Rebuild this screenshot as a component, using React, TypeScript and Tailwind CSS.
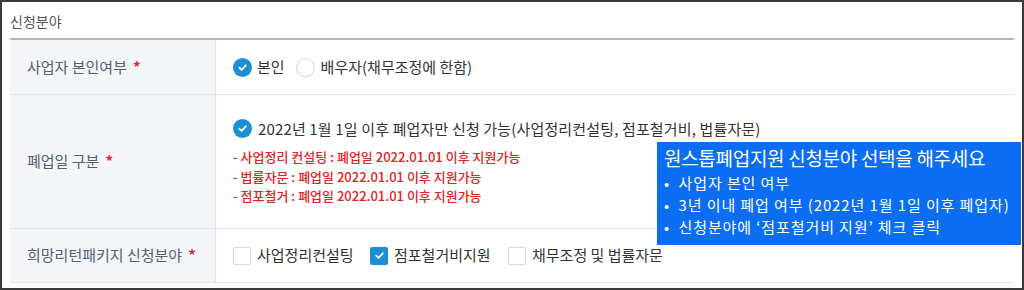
import type { ReactNode } from "react";

const FONT = { fontFamily: '"Noto Sans CJK KR", "Noto Sans", sans-serif' };

const CheckCircle = () => (
  <span className="flex h-[19px] w-[19px] shrink-0 items-center justify-center rounded-full bg-[#1d8fd6]">
    <svg width="11" height="11" viewBox="0 0 12 12" fill="none">
      <path d="M2.5 6.2 5 8.6 9.6 3.6" stroke="#fff" strokeWidth="2" strokeLinecap="round" strokeLinejoin="round" />
    </svg>
  </span>
);

const EmptyCircle = () => (
  <span className="block h-[19px] w-[19px] shrink-0 rounded-full border border-[#cfd3d8] bg-white" />
);

const Box = ({ checked }: { checked?: boolean }) =>
  checked ? (
    <span className="flex h-[18px] w-[18px] shrink-0 items-center justify-center rounded-[2px] bg-[#1d8fd6]">
      <svg width="11" height="11" viewBox="0 0 12 12" fill="none">
        <path d="M2.5 6.2 5 8.6 9.6 3.6" stroke="#fff" strokeWidth="2" strokeLinecap="round" strokeLinejoin="round" />
      </svg>
    </span>
  ) : (
    <span className="block h-[18px] w-[18px] shrink-0 rounded-[2px] border border-[#d4d7dc] bg-white" />
  );

const Row = ({ label, children, className }: { label: string; children: ReactNode; className: string }) => (
  <div className={`flex border-b border-[#e3e5e8] ${className}`}>
    <div className="flex w-[206px] shrink-0 items-center border-r border-[#e3e5e8] bg-[#f3f5f8] pl-[17px] text-[15px] text-[#556070]">
      {label}
      <span className="ml-[6px] font-bold text-[#e0262f]">*</span>
    </div>
    <div className="flex flex-1 flex-col justify-center pl-[17px]">{children}</div>
  </div>
);

export default function App() {
  return (
    <div className="relative h-[290px] w-[1024px] overflow-hidden border-2 border-[#3a3a3a] bg-white" style={FONT}>
      <div className="pl-[8px] pt-[6px] text-[14px] leading-[26px] text-[#555]">신청분야</div>

      <div className="mx-[8px] mt-[4px] border-t-2 border-[#b4b4b4]">
        {/* 사업자 본인여부 */}
        <Row label="사업자 본인여부" className="h-[55px]">
          <div className="flex items-center text-[15px] text-[#333]">
            <CheckCircle />
            <span className="ml-[5px]">본인</span>
            <span className="ml-[11px]">
              <EmptyCircle />
            </span>
            <span className="ml-[6px]">배우자(채무조정에 한함)</span>
          </div>
        </Row>

        {/* 폐업일 구분 */}
        <Row label="폐업일 구분" className="h-[134px]">
          <div className="flex items-center text-[15px] text-[#333]">
            <CheckCircle />
            <span className="ml-[6px] tracking-[0.15px]">2022년 1월 1일 이후 폐업자만 신청 가능(사업정리컨설팅, 점포철거비, 법률자문)</span>
          </div>
          <div className="mt-[7px] flex flex-col text-[13px] font-medium leading-[19.5px] text-[#e02424]">
            <span>- 사업정리 컨설팅 : 폐업일 2022.01.01 이후 지원가능</span>
            <span>- 법률자문 : 폐업일 2022.01.01 이후 지원가능</span>
            <span>- 점포철거 : 폐업일 2022.01.01 이후 지원가능</span>
          </div>
        </Row>

        {/* 희망리턴패키지 신청분야 */}
        <Row label="희망리턴패키지 신청분야" className="h-[54px]">
          <div className="flex items-center text-[15px] text-[#333]">
            <Box />
            <span className="ml-[6px] w-[113px]">사업정리컨설팅</span>
            <Box checked />
            <span className="ml-[6px] w-[114px]">점포철거비지원</span>
            <Box />
            <span className="ml-[6px]">채무조정 및 법률자문</span>
          </div>
        </Row>
      </div>

      {/* 안내 박스 */}
      <div className="absolute left-[655px] top-[140px] h-[103px] w-[364px] bg-[#0b6df2] pl-[7px] pt-[2px] text-white">
        <div className="text-[19px] leading-[28px] tracking-[-0.3px]">원스톱폐업지원 신청분야 선택을 해주세요</div>
        <ul className="text-[15px] leading-[22px] tracking-[0.9px]">
          <li>• &nbsp;사업자 본인 여부</li>
          <li>• &nbsp;3년 이내 폐업 여부 (2022년 1월 1일 이후 폐업자)</li>
          <li>• &nbsp;신청분야에 ‘점포철거비 지원’ 체크 클릭</li>
        </ul>
      </div>
    </div>
  );
}
